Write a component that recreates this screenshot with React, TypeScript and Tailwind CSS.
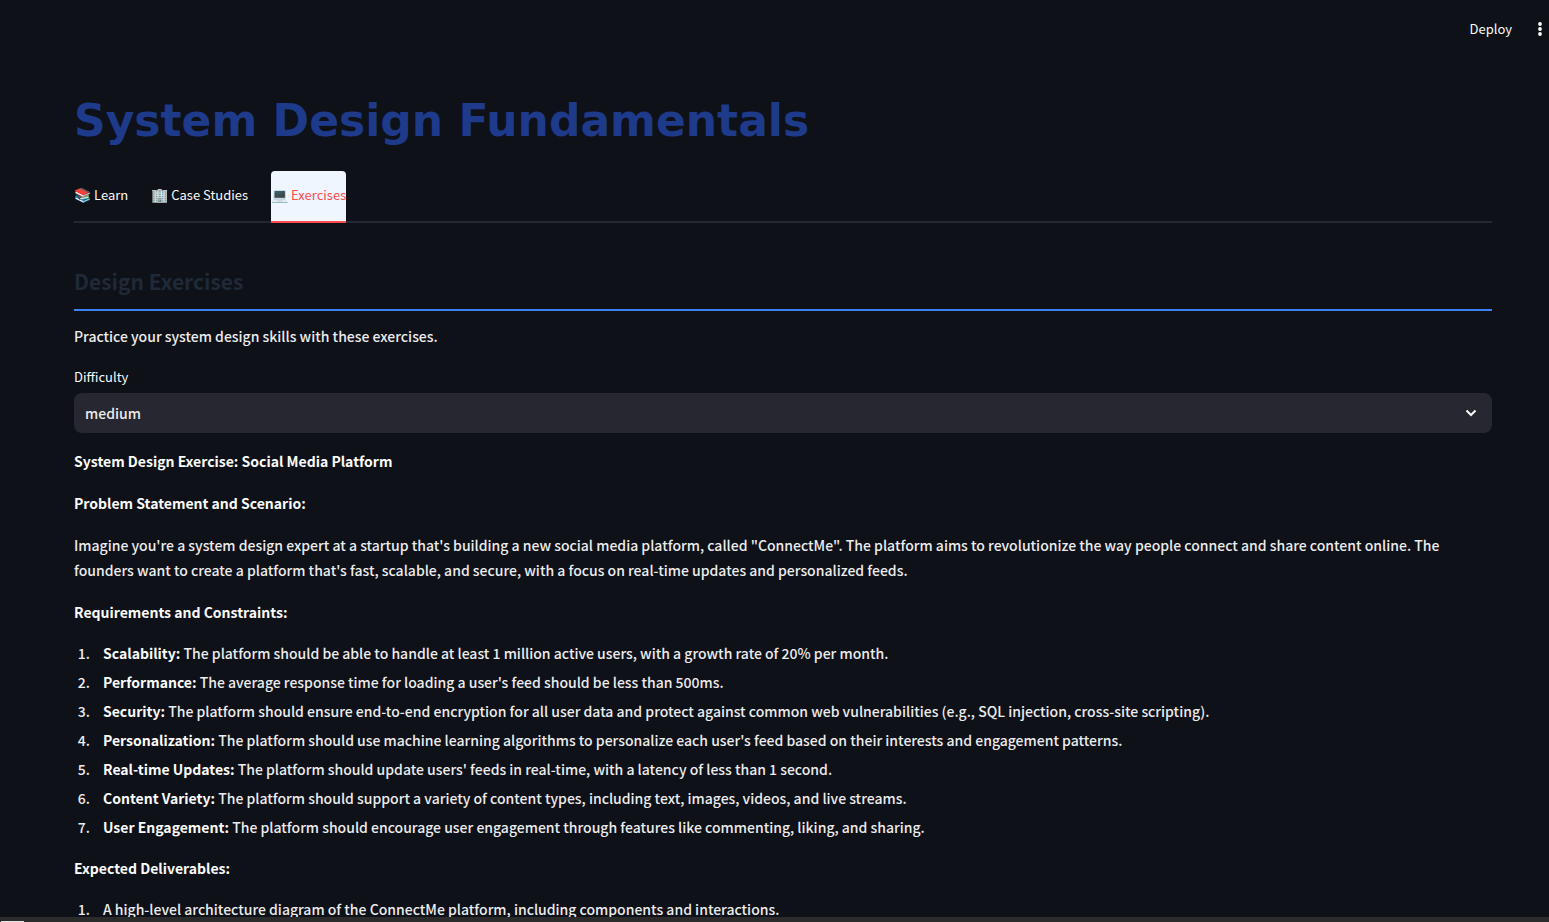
import { useState } from "react";

const tabs = [
  { icon: "📚", label: "Learn" },
  { icon: "🏢", label: "Case Studies" },
  { icon: "💻", label: "Exercises" },
];

const requirements = [
  ["Scalability:", "The platform should be able to handle at least 1 million active users, with a growth rate of 20% per month."],
  ["Performance:", "The average response time for loading a user's feed should be less than 500ms."],
  ["Security:", "The platform should ensure end-to-end encryption for all user data and protect against common web vulnerabilities (e.g., SQL injection, cross-site scripting)."],
  ["Personalization:", "The platform should use machine learning algorithms to personalize each user's feed based on their interests and engagement patterns."],
  ["Real-time Updates:", "The platform should update users' feeds in real-time, with a latency of less than 1 second."],
  ["Content Variety:", "The platform should support a variety of content types, including text, images, videos, and live streams."],
  ["User Engagement:", "The platform should encourage user engagement through features like commenting, liking, and sharing."],
];

function Header() {
  return (
    <header className="flex h-[58px] shrink-0 items-center justify-end gap-[23px] pr-1 text-[13px] leading-5 font-normal">
      <button type="button">Deploy</button>
      <button type="button" aria-label="Main menu">
        <svg width="10" height="16" viewBox="0 0 10 16" fill="currentColor">
          <circle cx="5" cy="3" r="1.9" />
          <circle cx="5" cy="8" r="1.9" />
          <circle cx="5" cy="13" r="1.9" />
        </svg>
      </button>
    </header>
  );
}

function Tabs() {
  const [active, setActive] = useState(2);
  return (
    <div role="tablist" className="mt-[22px] flex gap-[23px] border-b-2 border-[#262730] text-[13px] font-normal">
      {tabs.map((tab, i) => (
        <button
          key={tab.label}
          type="button"
          role="tab"
          aria-selected={i === active}
          onClick={() => setActive(i)}
          className={
            i === active
              ? "-mb-0.5 flex h-[52px] items-center gap-[3px] rounded-t border-b-2 border-[#ff4b4b] bg-[#eff6ff] pb-1 whitespace-nowrap text-[#ff4b4b]"
              : "-mb-0.5 flex h-[52px] items-center gap-[3px] border-b-2 border-transparent pb-1 whitespace-nowrap"
          }
        >
          <span className="text-[14px]">{tab.icon}</span>
          <span>{tab.label}</span>
        </button>
      ))}
    </div>
  );
}

function Difficulty() {
  return (
    <div className="mt-4 flex flex-col">
      <label htmlFor="difficulty" className="text-[13px] leading-6 font-normal">
        Difficulty
      </label>
      <div className="relative mt-1">
        <select
          id="difficulty"
          defaultValue="medium"
          className="h-10 w-full appearance-none rounded-lg bg-[#262730] px-[11px] text-[#ececee]"
        >
          <option>easy</option>
          <option>medium</option>
          <option>hard</option>
        </select>
        <svg
          className="pointer-events-none absolute top-3 right-[13px]"
          width="16"
          height="16"
          viewBox="0 0 16 16"
          fill="none"
          stroke="currentColor"
          strokeWidth="2"
        >
          <path d="M3.5 5.5 8 10l4.5-4.5" />
        </svg>
      </div>
    </div>
  );
}

export default function App() {
  return (
    <div className="flex h-screen flex-col overflow-hidden bg-[#0e1117] font-['Noto_Sans_CJK_SC',sans-serif] text-[14px] leading-[25px] font-medium text-[#fafafa]">
      <Header />
      <main className="min-h-0 flex-1 overflow-hidden pr-[57px] pl-[74px]">
        <h1 className="mt-[35px] font-['DejaVu_Sans',sans-serif] text-[44px] leading-[56px] font-bold text-[#1e3a8a]">
          System Design Fundamentals
        </h1>
        <Tabs />
        <h2 className="mt-[38px] border-b-2 border-[#3b82f6] pt-1 pb-3 text-[21px] leading-8 font-bold text-[#1f2937]">
          Design Exercises
        </h2>
        <p className="mt-[13px] text-[#ececee]">Practice your system design skills with these exercises.</p>
        <Difficulty />
        <div className="mt-4 flex flex-col gap-[17px]">
          <p className="font-bold">System Design Exercise: Social Media Platform</p>
          <p className="font-bold">Problem Statement and Scenario:</p>
          <p className="pr-8 text-[#ececee]">
            Imagine you're a system design expert at a startup that's building a new social media platform, called
            "ConnectMe". The platform aims to revolutionize the way people connect and share content online. The
            founders want to create a platform that's fast, scalable, and secure, with a focus on real-time updates and
            personalized feeds.
          </p>
          <p className="font-bold">Requirements and Constraints:</p>
        </div>
        <ol className="mt-4 flex list-decimal flex-col gap-1 pl-[19px] text-[#ececee]">
          {requirements.map(([name, text]) => (
            <li key={name} className="pl-2.5">
              <strong className="font-bold text-[#fafafa]">{name}</strong> {text}
            </li>
          ))}
        </ol>
        <p className="mt-4 font-bold">Expected Deliverables:</p>
        <ol className="mt-4 list-decimal pl-[19px] text-[#ececee]">
          <li className="pl-2.5">
            A high-level architecture diagram of the ConnectMe platform, including components and interactions.
          </li>
        </ol>
      </main>
      <footer className="flex h-[5px] shrink-0 items-end bg-[#2b2b2b]">
        <div className="ml-px h-px w-[23px] bg-[#e5e5e5]" />
      </footer>
    </div>
  );
}
